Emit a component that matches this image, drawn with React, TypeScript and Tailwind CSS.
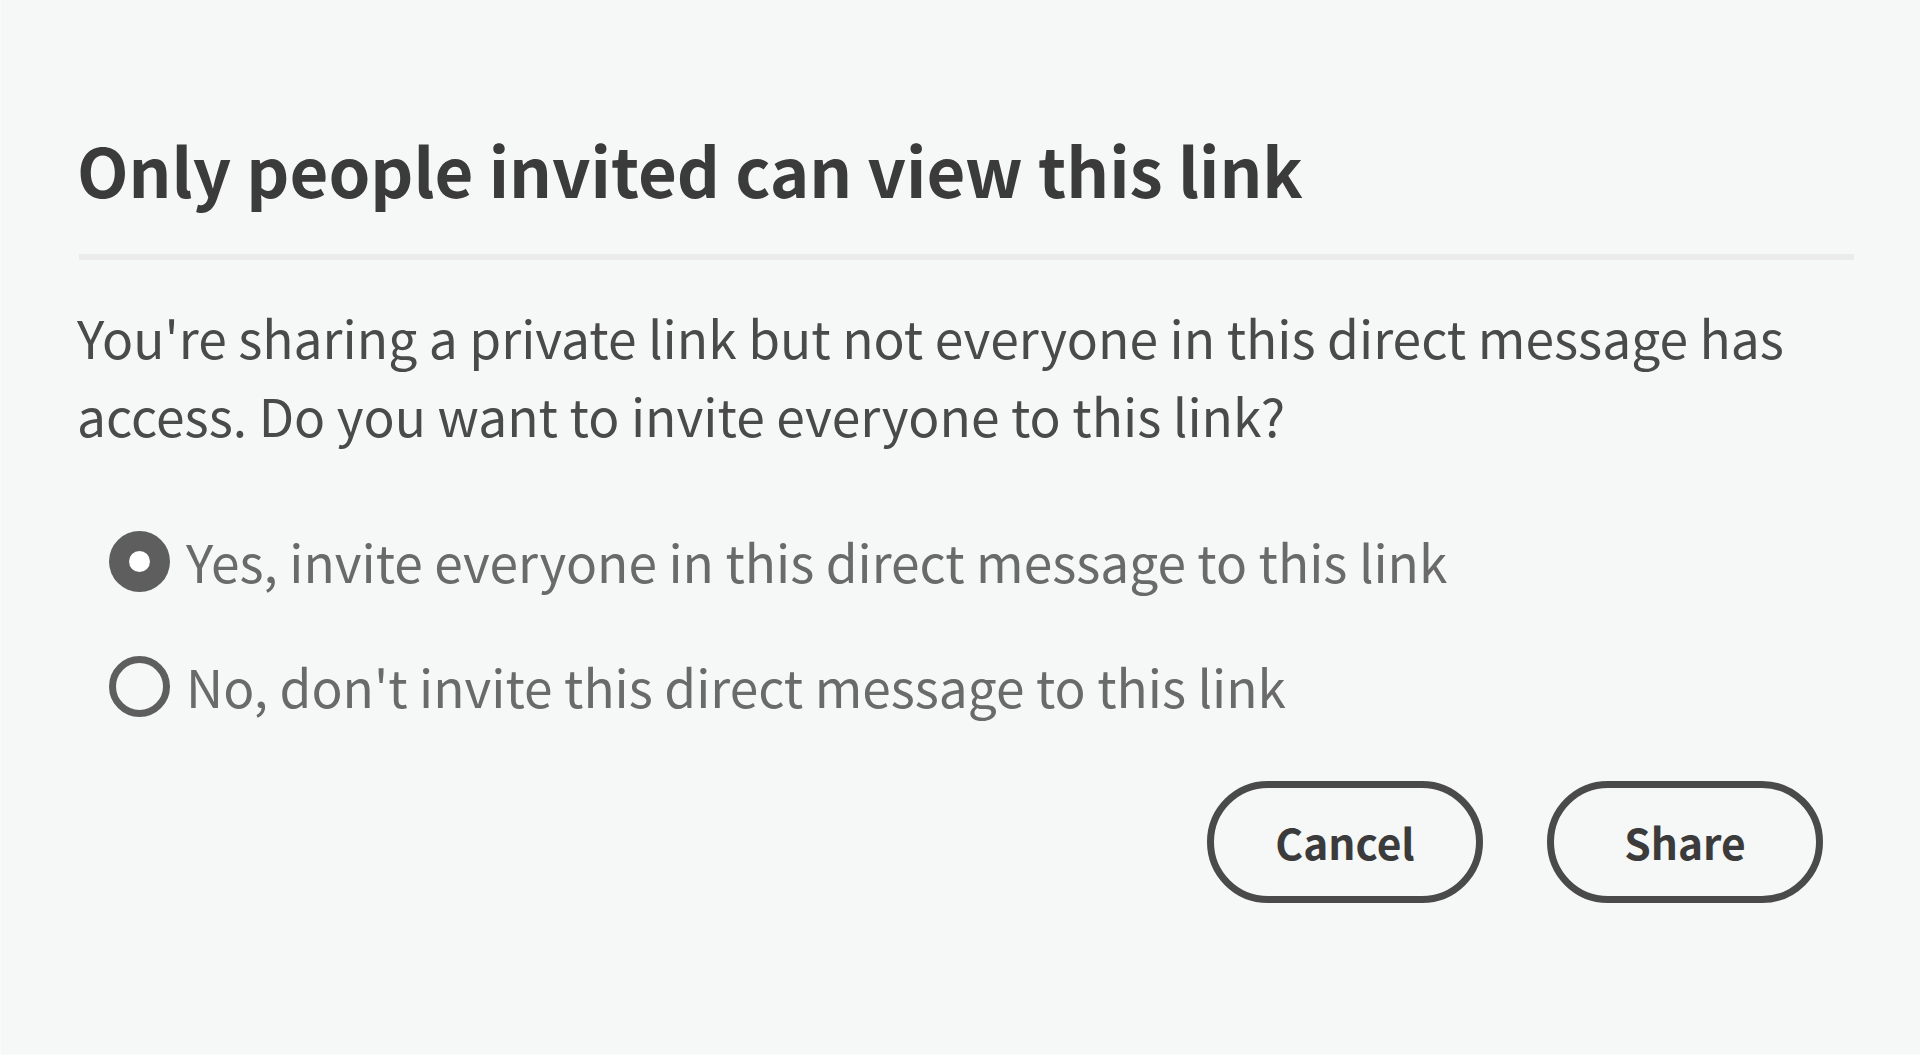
import React, { useState } from "react";

const FONT = "font-['Noto_Sans_CJK_SC',_'Noto_Sans',_sans-serif]";

function Radio({ checked }: { checked: boolean }) {
  return checked ? (
    <span className="flex h-[61px] w-[61px] shrink-0 items-center justify-center rounded-full bg-[#5e5e5e]">
      <span className="h-[21px] w-[21px] rounded-full bg-white" />
    </span>
  ) : (
    <span className="h-[61px] w-[61px] shrink-0 rounded-full border-[7px] border-[#5e5e5e]" />
  );
}

export default function App() {
  const [choice, setChoice] = useState<"yes" | "no">("yes");
  const options: { id: "yes" | "no"; label: string }[] = [
    { id: "yes", label: "Yes, invite everyone in this direct message to this link" },
    { id: "no", label: "No, don't invite this direct message to this link" },
  ];
  return (
    <div className={`${FONT} h-[1055px] w-full overflow-hidden border-l border-b border-[#fbfbfb] bg-[#f6f7f7]`}>
      <div className="flex flex-col pl-[78px] pr-[66px] pt-[129px]">
        <h1 className="-ml-[2px] text-[67px] font-bold leading-[80px] text-[#3b3b3b]">
          Only people invited can view this link
        </h1>
        <div className="mt-[45px] h-[6px] w-full bg-[#ebebeb]" />
        <p className="-ml-[2px] mt-[38px] text-[51.5px] leading-[78px] text-[#4a4a4a]">
          You're sharing a private link but not everyone in this direct message has access. Do you want to invite everyone to this link?
        </p>
        <div className="mt-[77px] flex flex-col gap-[64px] pl-[30px]">
          {options.map((o) => (
            <button
              key={o.id}
              type="button"
              onClick={() => setChoice(o.id)}
              className="flex items-center gap-[16px] text-left"
            >
              <Radio checked={choice === o.id} />
              <span className="-translate-y-[1px] text-[51.4px] leading-[60px] text-[#6a6a6a]">{o.label}</span>
            </button>
          ))}
        </div>
        <div className="mr-[31px] mt-[64px] flex justify-end gap-[64px]">
          <button
            type="button"
            className="flex h-[122px] w-[276px] items-center justify-center rounded-full border-[7px] border-[#4a4a4a] text-[42.5px] font-bold text-[#3b3b3b]"
          >
            Cancel
          </button>
          <button
            type="button"
            className="flex h-[122px] w-[276px] items-center justify-center rounded-full border-[7px] border-[#4a4a4a] text-[42.5px] font-bold text-[#3b3b3b]"
          >
            Share
          </button>
        </div>
      </div>
    </div>
  );
}
